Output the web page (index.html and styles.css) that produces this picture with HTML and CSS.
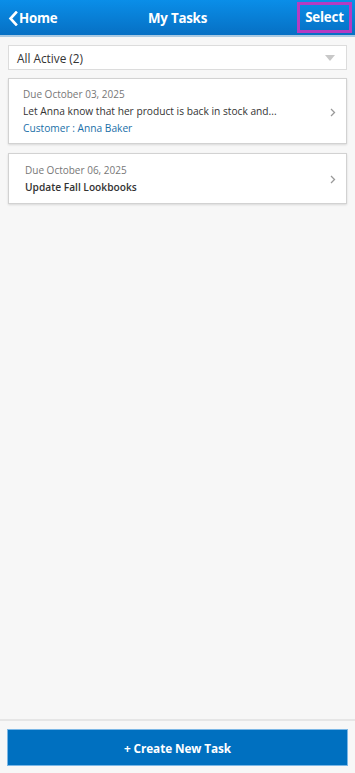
FILE: index.html
```html
<!DOCTYPE html>
<html>
<head>
<meta charset="utf-8">
<link rel="stylesheet" href="styles.css">
</head>
<body>
<div class="app">
  <header class="topbar">
    <a class="back">
      <svg class="back-icon" width="10" height="15" viewBox="0 0 10 15"><path d="M8 1.5 L2.5 7.5 L8 13.5" fill="none" stroke="#fff" stroke-width="2.6" stroke-linecap="square"/></svg>
      <span>Home</span>
    </a>
    <div class="title">My Tasks</div>
    <a class="select">Select</a>
  </header>
  <main class="content">
    <div class="filter">
      <span>All Active (2)</span>
      <span class="caret"></span>
    </div>
    <div class="card">
      <div class="card-body">
        <div class="due">Due October 03, 2025</div>
        <div class="task">Let Anna know that her product is back in stock and...</div>
        <div class="customer">Customer : Anna Baker</div>
      </div>
      <svg class="chev" width="6" height="9" viewBox="0 0 6 9"><path d="M1 1 L4.5 4.5 L1 8" fill="none" stroke="#999" stroke-width="1.3"/></svg>
    </div>
    <div class="card card-alt">
      <div class="card-body">
        <div class="due">Due October 06, 2025</div>
        <div class="task task-strong">Update Fall Lookbooks</div>
      </div>
      <svg class="chev" width="6" height="9" viewBox="0 0 6 9"><path d="M1 1 L4.5 4.5 L1 8" fill="none" stroke="#999" stroke-width="1.3"/></svg>
    </div>
  </main>
  <footer class="footer">
    <button class="create">+ Create New Task</button>
  </footer>
</div>
</body>
</html>
```
FILE: styles.css
```css
* { box-sizing: border-box; }
html, body { margin: 0; padding: 0; height: 100%; }
body {
  font-family: "Open Sans", "Noto Sans", sans-serif;
  background: #f7f7f7;
  color: #333;
}
.app {
  display: flex;
  flex-direction: column;
  height: 773px;
}
.topbar {
  height: 37px;
  flex: none;
  display: flex;
  align-items: center;
  justify-content: space-between;
  background: linear-gradient(#0a8ee8, #0670c4);
  border-bottom: 2px solid #a9c9e2;
  padding: 0 3px 0 8px;
  position: relative;
  color: #fff;
  font-weight: 700;
  font-size: 13.3px;
}
.back {
  display: flex;
  align-items: center;
  gap: 1px;
  letter-spacing: -0.2px;
}
.back-icon { margin-top: 1px; }
.title {
  position: absolute;
  left: 0;
  right: 0;
  text-align: center;
  pointer-events: none;
  letter-spacing: -0.2px;
}
.select {
  border: 3px solid #b43cc2;
  width: 55px;
  height: 31px;
  display: flex;
  align-items: center;
  justify-content: center;
  margin-top: -1px;
  letter-spacing: -0.2px;
}
.content {
  flex: 1;
  padding: 8px 8px 0 8px;
  display: flex;
  flex-direction: column;
}
.filter {
  height: 25px;
  background: #fff;
  border: 1px solid #dcdcdc;
  display: flex;
  align-items: center;
  justify-content: space-between;
  padding: 0 11px 0 8px;
  font-size: 11.8px;
  color: #333;
  margin-bottom: 8px;
}
.caret {
  width: 0; height: 0;
  border-left: 5px solid transparent;
  border-right: 5px solid transparent;
  border-top: 6px solid #c8c8c8;
}
.card {
  background: #fff;
  border: 1px solid #d2d2d2;
  box-shadow: 0 1px 2px rgba(0,0,0,0.12);
  display: flex;
  align-items: center;
  justify-content: space-between;
  padding: 7px 10px 7px 14px;
  margin-bottom: 9px;
  height: 66px;
}
.card-alt { height: 51px; padding-left: 16px; }
.card-body { display: flex; flex-direction: column; gap: 3px; }
.due { font-size: 10px; color: #777; line-height: 14px; }
.task { font-size: 10.2px; color: #333; line-height: 14px; }
.task-strong { font-weight: 600; font-size: 10.2px; }
.customer { font-size: 10.2px; color: #1a6fa8; line-height: 14px; }
.chev { flex: none; margin-top: 2px; }
.footer {
  flex: none;
  height: 54px;
  border-top: 2px solid #e6e6e6;
  padding: 8px 7px 0 7px;
}
.create {
  width: 100%;
  height: 37px;
  background: #0070c0;
  border: 1px solid #7bb7e6;
  color: #fff;
  font-family: "Open Sans", sans-serif;
  font-weight: 700;
  font-size: 11.8px;
  letter-spacing: -0.1px;
  padding: 0;
}
```
